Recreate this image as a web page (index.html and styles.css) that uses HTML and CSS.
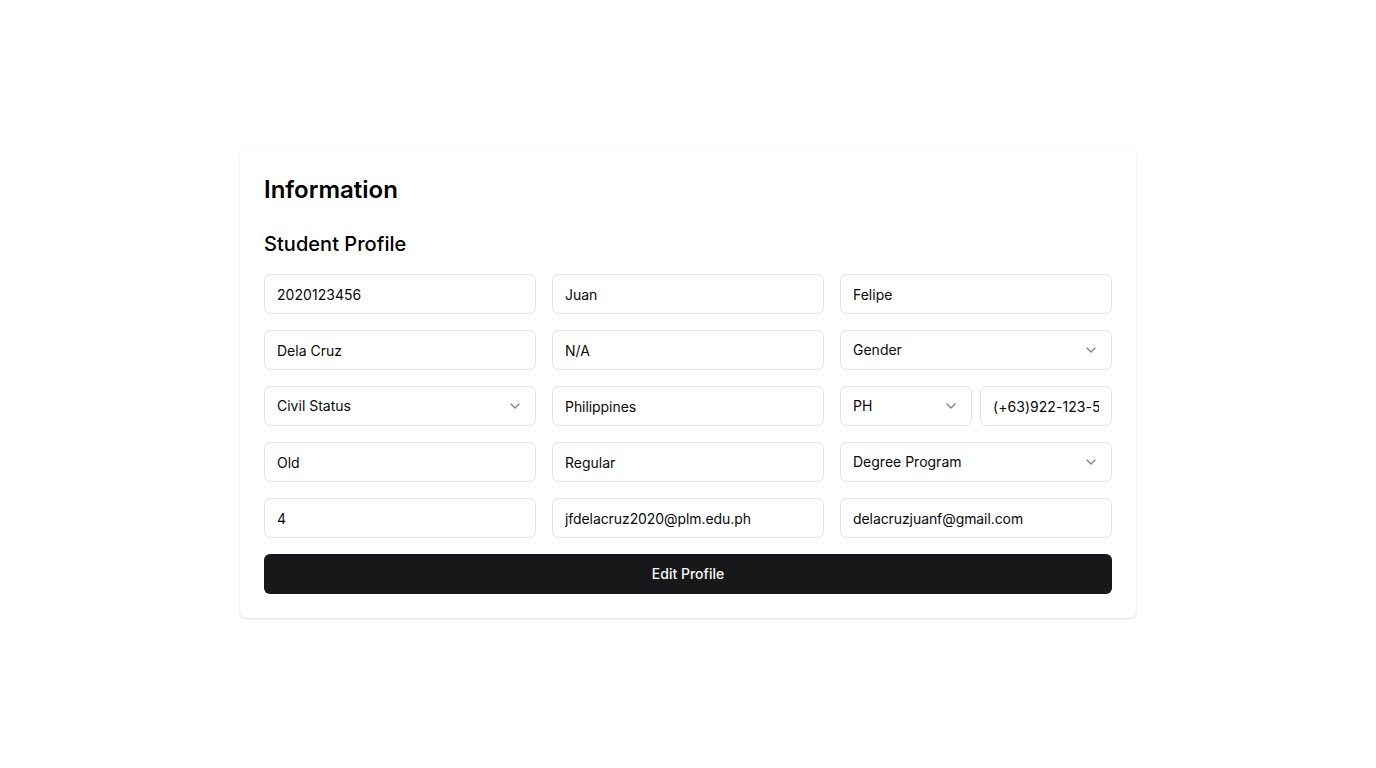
FILE: index.html
```html
<!DOCTYPE html>
<html lang="en">
<head>
<meta charset="utf-8">
<title>Student Profile</title>
<link rel="stylesheet" href="styles.css">
</head>
<body>
<main class="card">
  <h1 class="title">Information</h1>
  <h2 class="subtitle">Student Profile</h2>
  <form class="form">
    <div class="grid">
      <input class="field numeric" value="2020123456">
      <input class="field name" value="Juan">
      <input class="field" value="Felipe">
      <input class="field" value="Dela Cruz">
      <input class="field" value="N/A">
      <button type="button" class="field select"><span>Gender</span><svg class="chevron" viewBox="0 0 24 24"><path d="m6 9 6 6 6-6"/></svg></button>
      <button type="button" class="field select"><span>Civil Status</span><svg class="chevron" viewBox="0 0 24 24"><path d="m6 9 6 6 6-6"/></svg></button>
      <input class="field name" value="Philippines">
      <div class="phone">
        <button type="button" class="field select"><span>PH</span><svg class="chevron" viewBox="0 0 24 24"><path d="m6 9 6 6 6-6"/></svg></button>
        <input class="field numeric" value="(+63)922-123-5678">
      </div>
      <input class="field" value="Old">
      <input class="field" value="Regular">
      <button type="button" class="field select"><span>Degree Program</span><svg class="chevron" viewBox="0 0 24 24"><path d="m6 9 6 6 6-6"/></svg></button>
      <input class="field" value="4">
      <input class="field email" value="jfdelacruz2020@plm.edu.ph">
      <input class="field email" value="delacruzjuanf@gmail.com">
    </div>
    <button type="button" class="submit">Edit Profile</button>
  </form>
</main>
</body>
</html>
```
FILE: styles.css
```css
*, *::before, *::after { box-sizing: border-box; }
body {
  margin: 0;
  min-height: 100vh;
  display: flex;
  align-items: center;
  justify-content: center;
  background: #fff;
  color: #09090b;
  font-family: Inter, "Liberation Sans", sans-serif;
}
.card {
  width: 896px;
  padding: 24px;
  background: #fff;
  border-radius: 6px;
  box-shadow: 0 1px 3px 0 rgb(0 0 0 / 0.1), 0 1px 2px -1px rgb(0 0 0 / 0.1);
}
.title { margin: 0 0 24px; font-size: 24px; line-height: 32px; font-weight: 600; color: #000; }
.subtitle { margin: 0 0 16px; font-size: 20px; line-height: 28px; font-weight: 500; letter-spacing: 0.04px; color: #000; }
.form { display: flex; flex-direction: column; gap: 16px; }
.grid { display: grid; grid-template-columns: repeat(3, minmax(0, 1fr)); gap: 16px; }
.field {
  display: flex;
  width: 100%;
  min-width: 0;
  height: 40px;
  margin: 0;
  padding: 8px 12px;
  border: 1px solid #e4e4e7;
  border-radius: 6px;
  background: #fff;
  color: #09090b;
  font: 400 14px/20px Inter, "Liberation Sans", sans-serif;
}
.numeric { letter-spacing: 0.05px; }
.name { letter-spacing: -0.06px; }
.email { letter-spacing: -0.08px; }
.select { align-items: center; justify-content: space-between; }
.chevron {
  width: 16px;
  height: 16px;
  fill: none;
  stroke: currentColor;
  stroke-width: 2;
  stroke-linecap: round;
  stroke-linejoin: round;
  opacity: 0.5;
}
.phone { display: grid; grid-template-columns: repeat(2, minmax(0, 1fr)); gap: 8px; }
.submit {
  height: 40px;
  padding: 8px 16px;
  border: 0;
  border-radius: 6px;
  background: #18181b;
  color: #fafafa;
  font: 500 14px/20px Inter, "Liberation Sans", sans-serif;
}
```
